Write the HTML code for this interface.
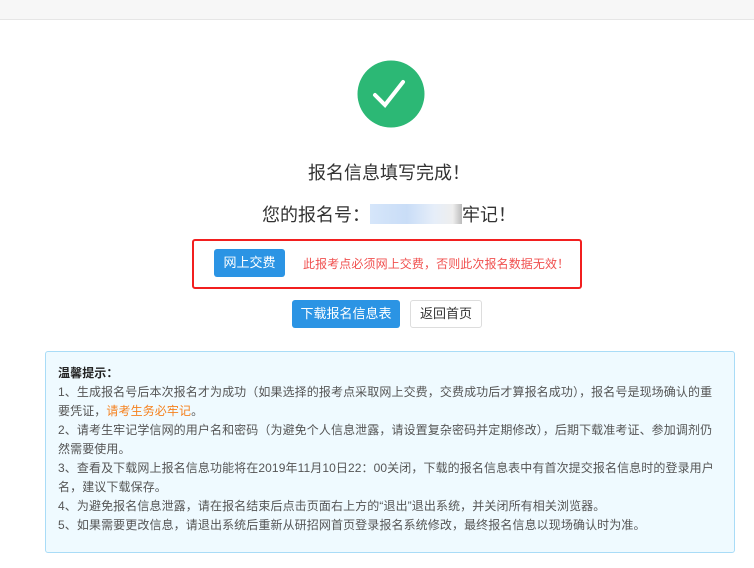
<!DOCTYPE html>
<html><head><meta charset="utf-8"><style>
body{margin:0;width:754px;height:568px;background:#fff;font-family:"Liberation Sans","Noto Sans CJK SC",sans-serif;position:relative;overflow:hidden}
.top{position:absolute;left:0;top:0;width:754px;height:19px;background:#f7f7f7;border-bottom:1px solid #e6e6e6}
.ab{position:absolute}
.t1{left:0;width:778px;text-align:center;top:159px;font-size:18px;color:#333}
.t2{left:0;width:778px;text-align:center;top:201px;font-size:18px;color:#333}
.blur{display:inline-block;width:92px;height:20px;vertical-align:-3px;background:linear-gradient(90deg,#d6e6fa,#c9ddf7 40%,#e6eef9 70%,#eee 90%,#bbb 100%);}
.red{left:192px;top:239px;width:386px;height:46px;border:2px solid #f21f1f;border-radius:3px}
.btn{position:absolute;background:#2b94e4;color:#fff;font-size:13px;text-align:center;border-radius:3px}
.info{left:45px;top:351px;width:688px;height:200px;background:#effaff;border:1px solid #a9dcf7;border-radius:3px}
.info div{font-size:12px;line-height:19px;color:#555;position:absolute;left:12px;width:680px;white-space:nowrap;letter-spacing:0.1px}
</style></head><body>
<div class="top"></div>
<svg class="ab" style="left:357px;top:60px" width="68" height="68"><circle cx="34" cy="34" r="33.5" fill="#2cb875"/><path d="M18 35 L28 45 L46 22" stroke="#fff" stroke-width="4" fill="none" stroke-linecap="round"/></svg>
<div class="ab t1">报名信息填写完成！</div>
<div class="ab t2">您的报名号：<span class="blur"></span>牢记！</div>
<div class="ab red"></div>
<div class="btn" style="left:214px;top:249px;width:71px;height:28px;line-height:28px">网上交费</div>
<div class="ab" style="left:303px;top:255px;font-size:12px;color:#f0504f;letter-spacing:0.1px">此报考点必须网上交费，否则此次报名数据无效！</div>
<div class="btn" style="left:292px;top:300px;width:108px;height:28px;line-height:28px">下载报名信息表</div>
<div class="ab" style="left:410px;top:300px;width:70px;height:26px;line-height:26px;border:1px solid #ddd;border-radius:3px;font-size:13px;color:#333;text-align:center">返回首页</div>
<div class="ab info">
<div style="top:12px;font-weight:bold;color:#222">温馨提示：</div>
<div style="top:31px">1、生成报名号后本次报名才为成功（如果选择的报考点采取网上交费，交费成功后才算报名成功），报名号是现场确认的重<br>要凭证，<span style="color:#f58220">请考生务必牢记</span>。</div>
<div style="top:69px">2、请考生牢记学信网的用户名和密码（为避免个人信息泄露，请设置复杂密码并定期修改），后期下载准考证、参加调剂仍<br>然需要使用。</div>
<div style="top:107px">3、查看及下载网上报名信息功能将在2019年11月10日22：00关闭，下载的报名信息表中有首次提交报名信息时的登录用户<br>名，建议下载保存。</div>
<div style="top:145px">4、为避免报名信息泄露，请在报名结束后点击页面右上方的“退出”退出系统，并关闭所有相关浏览器。</div>
<div style="top:164px">5、如果需要更改信息，请退出系统后重新从研招网首页登录报名系统修改，最终报名信息以现场确认时为准。</div>
</div>
</body></html>
